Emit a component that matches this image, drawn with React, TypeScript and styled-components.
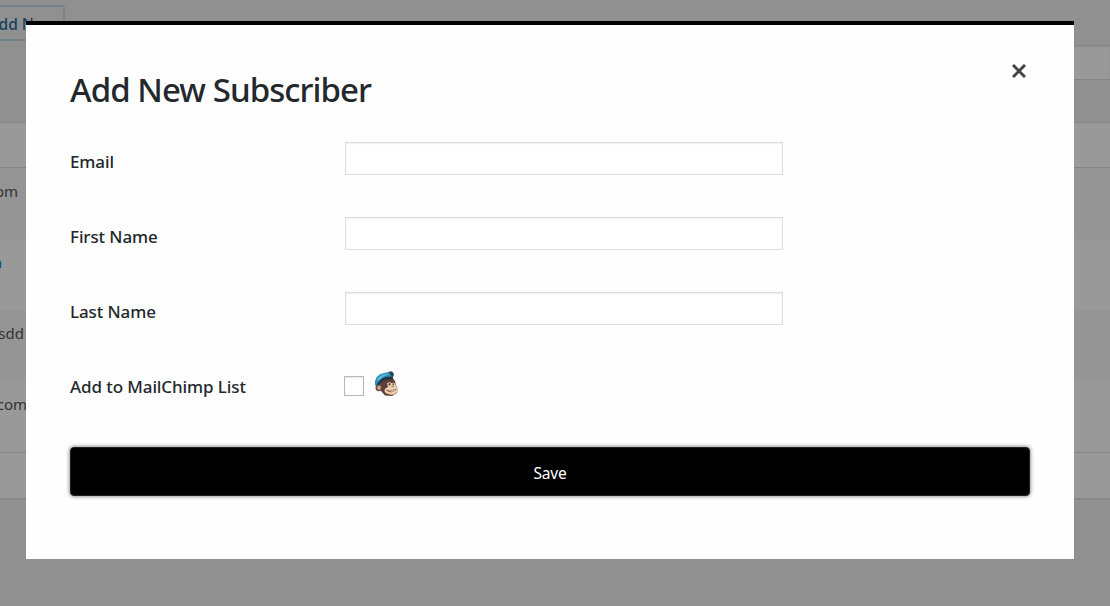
import React, { useState } from "react";
import styled, { createGlobalStyle } from "styled-components";

const GlobalStyle = createGlobalStyle`
  * { box-sizing: border-box; }
  html, body { margin: 0; height: 100%; overflow: hidden; background: #f1f1f1; }
  body { font-family: "Noto Sans", "Open Sans", sans-serif; color: #23282d; }
`;

const Page = styled.div`
  position: relative;
  width: 1110px;
  height: 606px;
  overflow: hidden;
  background: #f1f1f1;
`;

const HeadingBar = styled.div`
  height: 45px;
  padding-top: 5px;
`;

const AddButton = styled.a`
  display: flex;
  align-items: center;
  justify-content: flex-end;
  width: 85px;
  height: 36px;
  margin-left: -20px;
  padding: 1px 8px 0 0;
  border: 2px solid #c4dde6;
  border-radius: 3px;
  color: #22709c;
  font-size: 15.5px;
  font-weight: 500;
  white-space: nowrap;
`;

const FilterBar = styled.div`
  display: flex;
  justify-content: flex-end;
  height: 77px;
`;

const SearchField = styled.div`
  width: 300px;
  height: 35px;
  border: solid #ddd;
  border-width: 1px 0;
  background: #fff;
  box-shadow: inset 0 1px 2px rgba(0, 0, 0, 0.07);
`;

const Table = styled.div`
  display: grid;
  grid-template-rows: 45px 71px 71px 71px 71px 46px;
  height: 377px;
  border: solid #ddd;
  border-width: 1px 0;
  background: #fff;
  box-shadow: 0 1px 1px rgba(0, 0, 0, 0.04);
`;

const TableEdge = styled.div<{ $footer?: boolean }>`
  border: 0 solid #ddd;
  border-bottom-width: ${(p) => (p.$footer ? 0 : 1)}px;
  border-top-width: ${(p) => (p.$footer ? 1 : 0)}px;
`;

const TableRow = styled.div<{ $odd?: boolean }>`
  display: flex;
  padding-top: 12px;
  background: ${(p) => (p.$odd ? "#f9f9f9" : "#fff")};
`;

const EmailCell = styled.span<{ $end: number; $link?: boolean }>`
  display: flex;
  justify-content: flex-end;
  width: ${(p) => p.$end}px;
  height: 22px;
  line-height: 22px;
  font-size: 15px;
  color: ${(p) => (p.$link ? "#0073aa" : "#555")};
`;

const Backdrop = styled.div`
  position: absolute;
  inset: 0;
  padding: 21px 36px 0 26px;
  background: rgba(0, 0, 0, 0.4);
`;

const Dialog = styled.section`
  width: 1048px;
  height: 538px;
  padding: 42px 44px 0;
  border-top: 4px solid #000;
  background: #fefefe;
`;

const DialogHeader = styled.header`
  display: flex;
  justify-content: space-between;
  height: 75px;
`;

const Title = styled.h1`
  margin: 0;
  font-size: 33px;
  line-height: 46px;
  font-weight: 500;
  letter-spacing: -0.94px;
  white-space: nowrap;
`;

const CloseButton = styled.button`
  display: flex;
  width: 22px;
  height: 22px;
  margin-top: -7px;
  padding: 4px;
  border: 0;
  background: none;
  color: #444;
`;

const Form = styled.form`
  display: flex;
  flex-direction: column;
`;

const Field = styled.label`
  display: grid;
  grid-template-columns: 275px 438px;
  align-items: start;
  height: 75px;
`;

const FieldLabel = styled.span`
  padding-top: 7px;
  font-size: 17px;
  line-height: 25px;
  font-weight: 500;
  letter-spacing: -0.1px;
`;

const TextInput = styled.input`
  width: 438px;
  height: 33px;
  margin: 0;
  padding: 3px 8px;
  border: 1px solid #ddd;
  border-radius: 0;
  outline: 0;
  background: #fff;
  box-shadow: inset 0 1px 2px rgba(0, 0, 0, 0.07);
`;

const CheckArea = styled.span`
  display: flex;
  align-items: flex-start;
  gap: 10px;
  margin: 4px 0 0 -1px;
`;

const CheckBox = styled.input`
  appearance: none;
  width: 20px;
  height: 20px;
  margin: 5px 0 0;
  border: 1px solid #b4b9be;
  background: #fff;
  box-shadow: inset 0 1px 2px rgba(0, 0, 0, 0.1);
  &:checked { background: #555; }
`;

const SaveButton = styled.button`
  height: 49px;
  margin-top: 5px;
  padding: 2px 0 0;
  border: 1px solid #222;
  border-radius: 4px;
  background: #000;
  color: #fff;
  font: 400 15.5px/22px "Noto Sans", "Open Sans", sans-serif;
  letter-spacing: -0.2px;
  box-shadow: 0 0 4px rgba(0, 0, 0, 0.6);
`;

const Chimp = () => (
  <svg width="26" height="26" viewBox="0 0 26 26" aria-hidden="true">
    <path d="M5 12 L11 8 L18 6 L21 10 L22 14 L24 18 L23 22 L18 25 L11 24.5 L7 20 L3 18 Z" fill="#5c4037" />
    <ellipse cx="5" cy="16.5" rx="3.5" ry="3.8" fill="#66483d" />
    <ellipse cx="5" cy="16.8" rx="1.8" ry="2.2" fill="#d0a78b" />
    <path d="M13 12.5 Q14 9.5 17 11.5 Q20 9.5 21 12.5 L22 15 Q25 17 24 20 Q21 24.5 16 23.5 Q10 22.5 10.5 19 Q11 17 14 16 Z" fill="#ecd0b0" />
    <path d="M1 14 Q0 4 10 2 L17 .6 Q20.5 2 18.8 7 Q13 6 9 9 L3 15 Z" fill="#2d91bd" />
    <path d="M3 9 Q6 4 12 3 L15 2.8 Q9 5 4.5 9.5Z" fill="#66bddc" />
    <path d="M2 14.5 Q6 7.5 12 5.8 L18.7 5.4 L19 8 Q11 7.5 4.5 14 Z" fill="#263540" />
    <path d="M14.5 .8 L18 .5 L20 3 L19 6 L17 4.5Z" fill="#304552" />
    <path d="M13 11.5 Q15 9.5 17.5 11.2 L21 11" fill="none" stroke="#5c4037" strokeWidth="1.5" />
    <ellipse cx="15.5" cy="13.3" rx=".9" ry="1.2" fill="#49332b" />
    <ellipse cx="19.2" cy="13.2" rx=".7" ry="1" fill="#49332b" />
    <path d="M17.5 15.5 L20 15.3" stroke="#8a6554" strokeWidth="1" />
    <path d="M11.5 18.5 Q17 20.5 23 17.5 Q20.5 21.8 16 21.2 Q13 20.5 11.5 18.5Z" fill="#8b5a4b" />
    <path d="M13 19.3 Q18 20.6 22 18.5 L19.8 20.2 Q16 21 13 19.3Z" fill="#fff7ea" />
  </svg>
);

const rows = [
  { text: "om", end: 18 },
  { text: "m", end: 2, link: true },
  { text: "sdd", end: 24 },
  { text: "com", end: 27 },
];

const fields = ["Email", "First Name", "Last Name"];

export default function App() {
  const [listed, setListed] = useState(false);
  return (
    <Page>
      <GlobalStyle />
      <HeadingBar>
        <AddButton>Add New</AddButton>
      </HeadingBar>
      <FilterBar>
        <SearchField />
      </FilterBar>
      <Table>
        <TableEdge />
        {rows.map((row, i) => (
          <TableRow key={row.text} $odd={i % 2 === 0}>
            <EmailCell $end={row.end} $link={row.link}>{row.text}</EmailCell>
          </TableRow>
        ))}
        <TableEdge $footer />
      </Table>
      <Backdrop>
        <Dialog role="dialog" aria-label="Add New Subscriber">
          <DialogHeader>
            <Title>Add New Subscriber</Title>
            <CloseButton type="button" aria-label="Close">
              <svg width="14" height="14" viewBox="0 0 14 14">
                <path d="M1 1 L13 13 M13 1 L1 13" stroke="currentColor" strokeWidth="3" />
              </svg>
            </CloseButton>
          </DialogHeader>
          <Form onSubmit={(e) => e.preventDefault()}>
            {fields.map((name) => (
              <Field key={name}>
                <FieldLabel>{name}</FieldLabel>
                <TextInput type="text" />
              </Field>
            ))}
            <Field>
              <FieldLabel>Add to MailChimp List</FieldLabel>
              <CheckArea>
                <CheckBox type="checkbox" checked={listed} onChange={(e) => setListed(e.target.checked)} />
                <Chimp />
              </CheckArea>
            </Field>
            <SaveButton type="submit">Save</SaveButton>
          </Form>
        </Dialog>
      </Backdrop>
    </Page>
  );
}
